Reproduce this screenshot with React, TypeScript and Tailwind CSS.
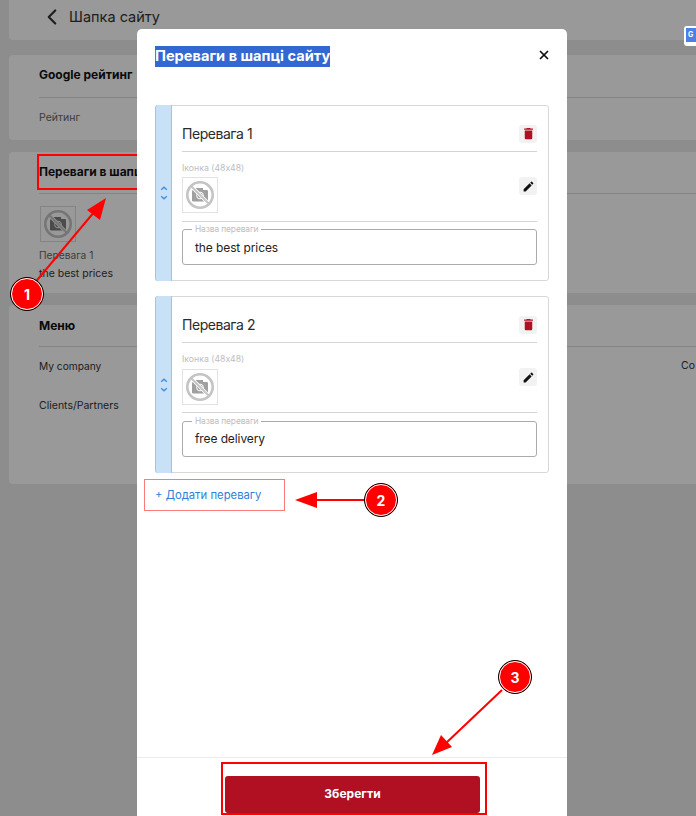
import React from 'react';
import { ChevronLeft, X } from 'lucide-react';

const font = { fontFamily: 'Inter, "Noto Sans", sans-serif' };

function NoPhoto({ dim = false }: { dim?: boolean }) {
  const body = dim ? '#7d7d7d' : '#a0a0a0';
  const bg = dim ? '#f4f4f4' : '#ffffff';
  return (
    <svg viewBox="0 0 34 34" className="w-[34px] h-[34px]">
      <rect x="9" y="12" width="16" height="11.5" rx="1.2" fill={body} />
      <rect x="13" y="10" width="7" height="3" fill={body} />
      <circle cx="17" cy="17.5" r="3.4" fill="none" stroke={bg} strokeWidth="1" />
      <path d="M8 8L26 26" stroke={bg} strokeWidth="3.6" />
      <path d="M8 8L26 26" stroke="#c4c4c4" strokeWidth="1.8" />
      <circle cx="17" cy="17" r="12.7" fill="none" stroke="#c4c4c4" strokeWidth="2.6" />
    </svg>
  );
}

function BenefitCard({ title, value }: { title: string; value: string }) {
  return (
    <div className="flex w-[394px] h-[176.4px] border border-[#d8d8d8] rounded-[3px]">
      <div className="-ml-px -my-px w-[17px] shrink-0 bg-[#c9e1f6] border-x border-[#90caf9] rounded-l-[3px] flex items-center justify-center">
        <svg viewBox="0 0 8 14" className="w-[8px] h-[14px]" fill="none" stroke="#3c8fdc" strokeWidth="1.4">
          <path d="M1.2 3.8L4 1.2l2.8 2.6" />
          <path d="M1.2 10.2L4 12.8l2.8-2.6" />
        </svg>
      </div>
      <div className="flex-1 pl-[10px] pr-[11px]">
        <div className="h-[46px] border-b border-[#d4d4d4] flex items-center justify-between pt-[10px]">
          <span className="text-[14px] tracking-[-0.45px] text-[#2b2b2b]">{title}</span>
          <span className="w-[18px] h-[18px] rounded-[3px] bg-[#f2f2f2] flex items-center justify-center">
            <svg viewBox="0 0 24 24" className="w-[15px] h-[15px]" fill="#b01022">
              <path d="M6 19c0 1.1.9 2 2 2h8c1.1 0 2-.9 2-2V7H6v12zM19 4h-3.5l-1-1h-5l-1 1H5v2h14V4z" />
            </svg>
          </span>
        </div>
        <div className="h-[70px] border-b border-[#d4d4d4] flex justify-between pt-[10px]">
          <div>
            <div className="text-[8.7px] leading-[12px] text-[#bdbdbd]">Іконка (48x48)</div>
            <div className="w-[36px] h-[36px] mt-[3.4px] border border-[#e2e2e2] flex items-center justify-center">
              <NoPhoto />
            </div>
          </div>
          <span className="w-[18px] h-[18px] mt-[15px] rounded-[3px] bg-[#f2f2f2] flex items-center justify-center">
            <svg viewBox="0 0 24 24" className="w-[13px] h-[13px]" fill="#111">
              <path d="M3 17.25V21h3.75L17.81 9.94l-3.75-3.75L3 17.25zM20.71 7.04c.39-.39.39-1.02 0-1.41l-2.34-2.34c-.39-.39-1.02-.39-1.41 0l-1.83 1.83 3.75 3.75 1.83-1.83z" />
            </svg>
          </span>
        </div>
        <div className="relative mt-[7.4px] h-[36px] border border-[#ababab] rounded-[3px] flex items-center pl-[12px] pt-[1px] text-[12px] tracking-[-0.1px] text-[#222]">
          <span className="absolute left-[9px] -top-[6px] bg-white px-[3px] text-[8.4px] leading-[11px] text-[#bdbdbd]">Назва переваги</span>
          {value}
        </div>
      </div>
    </div>
  );
}

export default function App() {
  return (
    <div className="relative w-full h-screen overflow-hidden bg-[#ebebeb]" style={font}>
      {/* page behind the dialog */}
      <div className="pl-[9px] w-[740px] flex flex-col">
        <div className="h-[40px] bg-white rounded-b-[4px] flex items-center pl-[30px] pb-[6px] text-[#333]">
          <ChevronLeft className="w-[26px] h-[26px]" strokeWidth={2} />
          <span className="ml-[4px] text-[14.5px]">Шапка сайту</span>
        </div>
        <div className="mt-[15px] h-[85px] bg-white rounded-[4px] pl-[30px]">
          <div className="h-[43px] pb-[2px] border-b border-[#ddd] flex items-center text-[12px] font-bold text-[#111]">Google рейтинг</div>
          <div className="mt-[13px] text-[10.5px] leading-[14px] text-[#666]">Рейтинг</div>
        </div>
        <div className="mt-[12px] h-[141px] bg-white rounded-[4px] pl-[30px]">
          <div className="h-[42px] pb-[2px] border-b border-[#ddd] flex items-center text-[12px] font-bold text-[#111]">Переваги в шапці сайту</div>
          <div className="w-[36px] h-[36px] mt-[12px] ml-[1px] border border-[#ddd] flex items-center justify-center">
            <NoPhoto dim />
          </div>
          <div className="mt-[6px] text-[10.2px] leading-[14px] text-[#666]">Перевага 1</div>
          <div className="mt-[5px] text-[10.5px] leading-[14px] text-[#333]">the best prices</div>
        </div>
        <div className="mt-[12px] h-[179px] bg-white rounded-[4px] pl-[30px]">
          <div className="h-[42px] border-b border-[#ddd] flex items-center text-[12px] font-bold text-[#111]">Меню</div>
          <div className="mt-[12px] flex leading-[14px] text-[#333]">
            <span className="w-[642px] text-[10.2px]">My company</span>
            <span className="text-[10.5px]">Co</span>
          </div>
          <div className="mt-[26px] text-[10.5px] leading-[14px] text-[#333]">Clients/Partners</div>
        </div>
      </div>

      <div className="absolute inset-0 bg-black/40" />

      {/* annotation box that sits below the dialog edge */}
      <div className="absolute left-[37px] top-[154px] w-[110px] h-[36px] border-2 border-[#f00]" />

      {/* translate extension tag */}
      <div className="absolute left-[684px] top-[26px] w-[14px] h-[20px] bg-white rounded-l-[3px] pl-[2px] pt-[2px]">
        <div className="w-[12px] h-[14px] bg-[#4a80e8] text-white text-[7px] leading-[14px] font-bold pl-[2px]">G</div>
      </div>

      {/* dialog */}
      <div className="absolute left-[137px] top-[29px] w-[430px] h-[800px] bg-white rounded-[5px] flex flex-col">
        <div className="flex-1 px-[18px] pt-[17px]">
          <div className="flex items-center justify-between">
            <span className="bg-[#3367d1] text-white text-[14.6px] leading-[21px] font-bold">Переваги в шапці сайту</span>
            <X className="w-[14px] h-[14px] mr-[-2px] mb-[3px] text-[#111]" strokeWidth={3} />
          </div>
          <div className="mt-[38px] flex flex-col gap-[15px]">
            <BenefitCard title="Перевага 1" value="the best prices" />
            <BenefitCard title="Перевага 2" value="free delivery" />
          </div>
          <div className="mt-[13px] text-[11.3px] leading-[18px] text-[#2f7fd9]">+ Додати перевагу</div>
        </div>
        <div className="h-[72px] border-t border-[#ececec] flex justify-center pt-[18px]">
          <button className="w-[255px] h-[37px] mr-[-1px] pb-[2px] bg-[#b01022] rounded-[3px] text-white text-[12px] font-bold">Зберегти</button>
        </div>
      </div>

      {/* annotations */}
      <div className="absolute left-[144px] top-[479px] w-[141px] h-[32px] border-[1.5px] border-[#fb7b7b]" />
      <div className="absolute left-[221px] top-[762px] w-[266px] h-[53px] border-2 border-[#f00]" />
      <svg className="absolute inset-0 w-full h-full pointer-events-none" viewBox="0 0 696 816">
        <path d="M28 291L95 211" stroke="#f00" strokeWidth="2" fill="none" />
        <path d="M106 198L87 210L100 220Z" fill="#f00" />
        <path d="M365 500L314 500" stroke="#f00" strokeWidth="2" fill="none" />
        <path d="M295 500L317 492L317 508Z" fill="#f00" />
        <path d="M502 690L445 744" stroke="#f00" strokeWidth="2" fill="none" />
        <path d="M432 755L441 735L452 747Z" fill="#f00" />
      </svg>
      {[
        { n: '1', cls: 'left-[10px] top-[277px]' },
        { n: '2', cls: 'left-[364px] top-[483px]' },
        { n: '3', cls: 'left-[498px] top-[660px]' },
      ].map(c => (
        <div
          key={c.n}
          className={`absolute ${c.cls} w-[34px] h-[34px] rounded-full bg-[#f00] border-[1px] border-black outline-1 outline-white -outline-offset-2 flex items-center justify-center text-white text-[14px] font-bold`}
        >
          {c.n}
        </div>
      ))}
    </div>
  );
}
